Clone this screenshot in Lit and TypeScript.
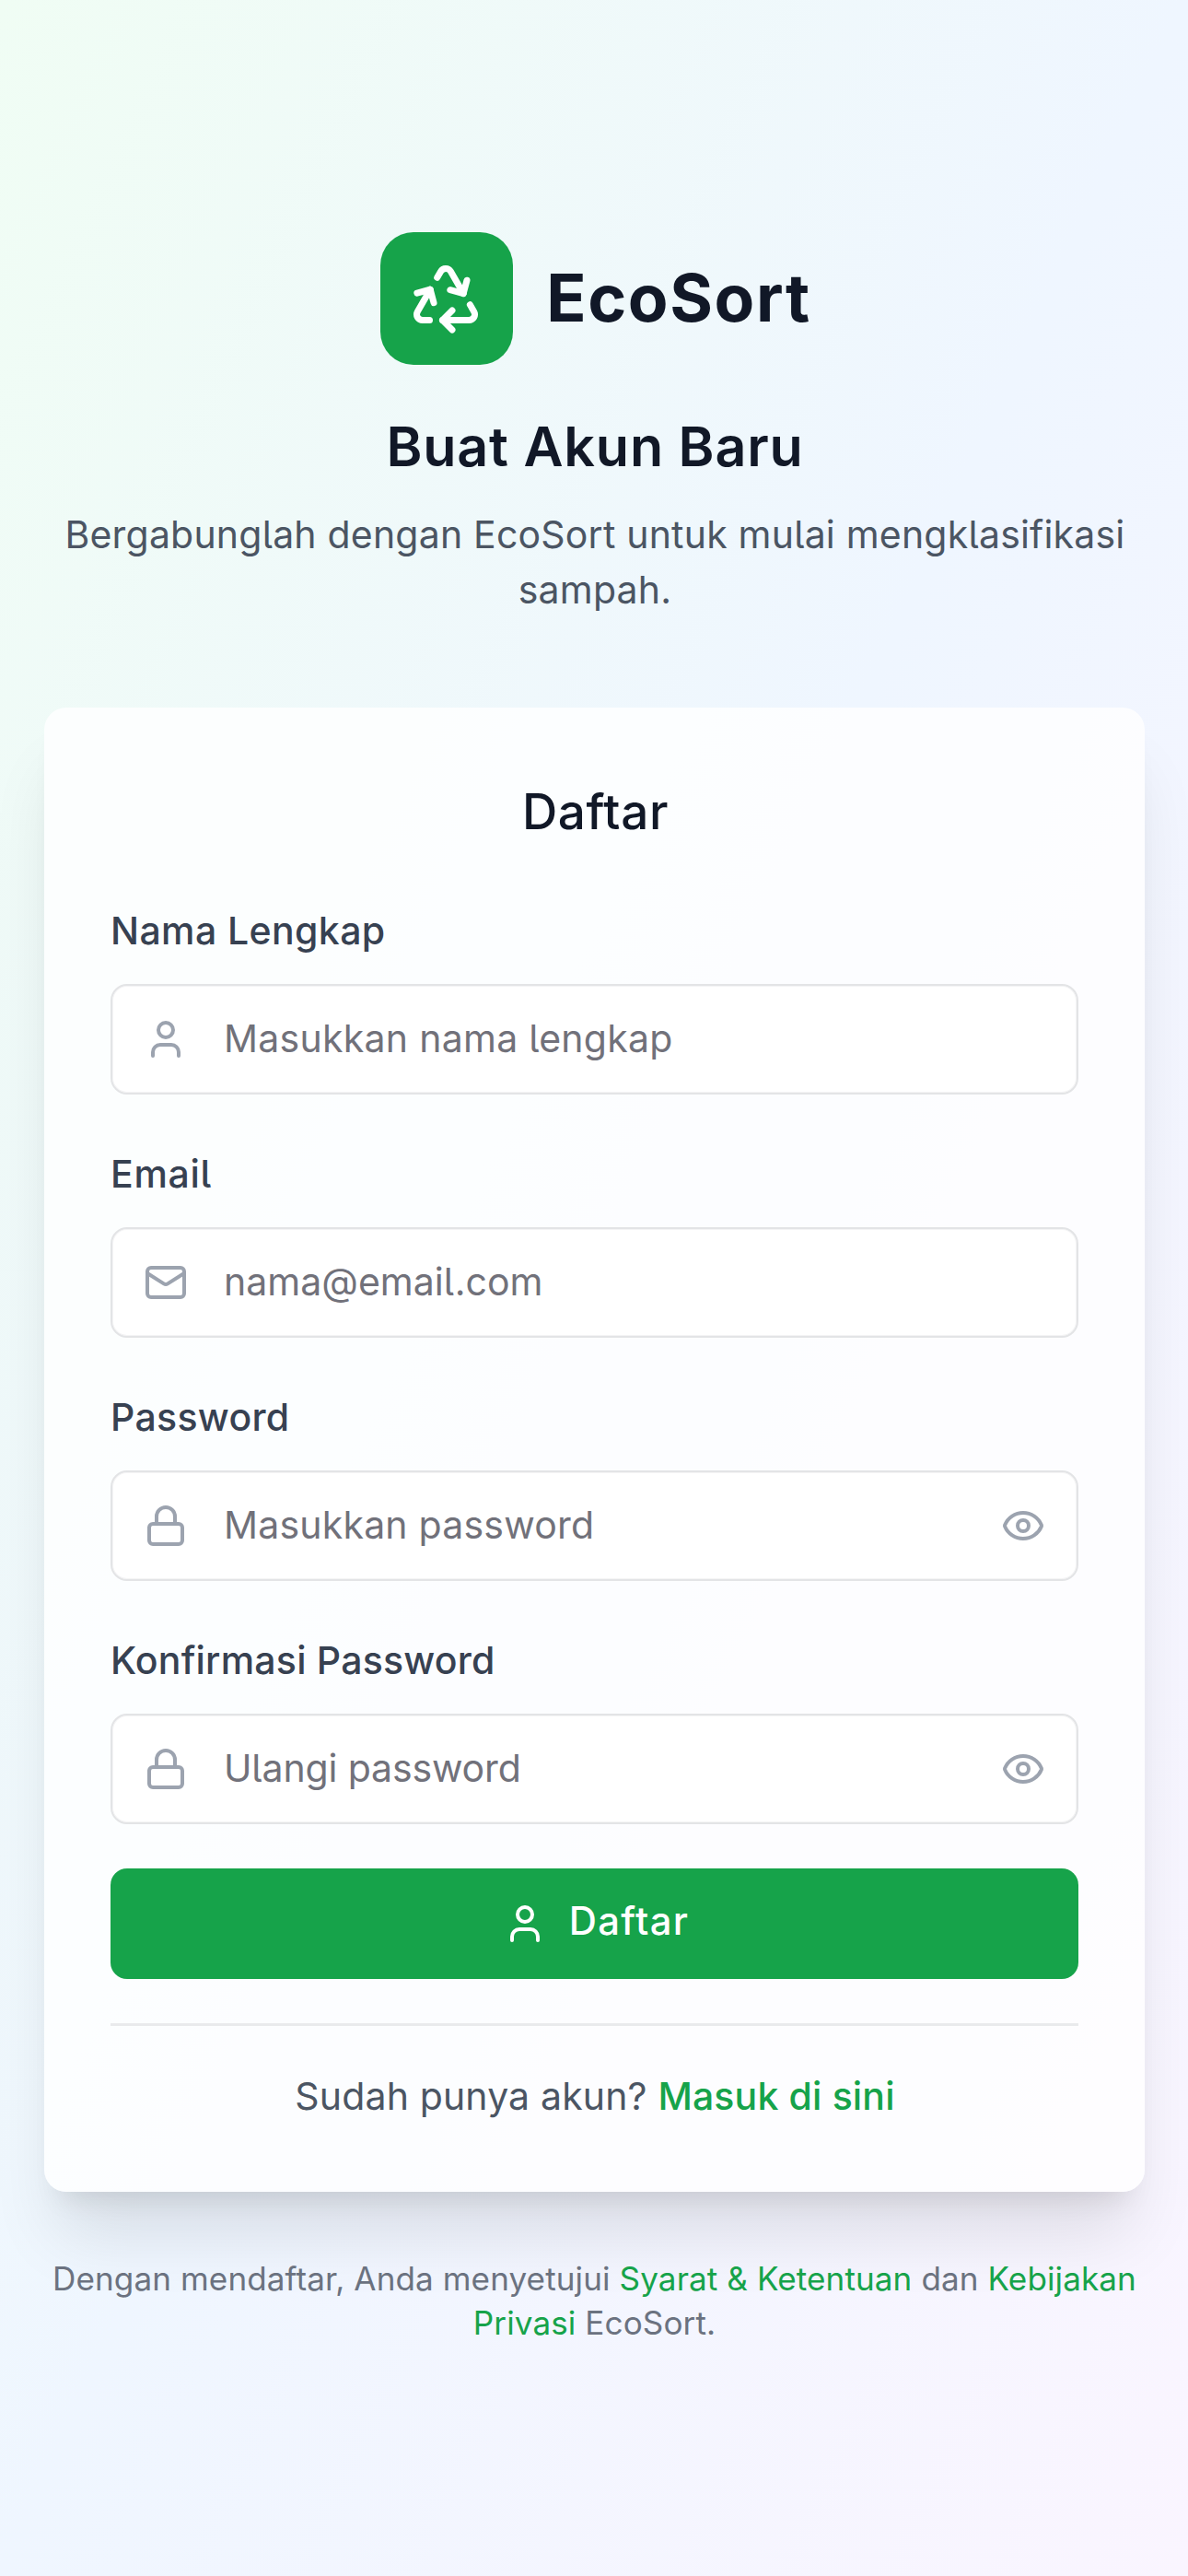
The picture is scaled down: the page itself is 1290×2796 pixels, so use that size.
import { LitElement, html, css, svg } from "lit";
import { customElement, property, state } from "lit/decorators.js";

const icons = {
  recycle: svg`
    <path d="M7 19H4.815a1.83 1.83 0 0 1-1.57-.881 1.785 1.785 0 0 1-.004-1.784L7.196 9.5"/>
    <path d="M11 19h8.203a1.83 1.83 0 0 0 1.556-.89 1.784 1.784 0 0 0 0-1.775l-1.226-2.12"/>
    <path d="m14 16-3 3 3 3"/>
    <path d="M8.293 13.596 7.196 9.5 3.1 10.598"/>
    <path d="m9.344 5.811 1.093-1.892A1.83 1.83 0 0 1 11.985 3a1.784 1.784 0 0 1 1.546.888l3.943 6.843"/>
    <path d="m13.378 9.633 4.096 1.098 1.097-4.096"/>`,
  user: svg`
    <path d="M19 21v-2a4 4 0 0 0-4-4H9a4 4 0 0 0-4 4v2"/>
    <circle cx="12" cy="7" r="4"/>`,
  mail: svg`
    <rect x="2" y="4" width="20" height="16" rx="2"/>
    <path d="m22 7-8.97 5.7a1.94 1.94 0 0 1-2.06 0L2 7"/>`,
  lock: svg`
    <rect x="3" y="11" width="18" height="11" rx="2"/>
    <path d="M7 11V7a5 5 0 0 1 10 0v4"/>`,
  eye: svg`
    <path d="M2.062 12.348a1 1 0 0 1 0-.696 10.75 10.75 0 0 1 19.876 0 1 1 0 0 1 0 .696 10.75 10.75 0 0 1-19.876 0"/>
    <circle cx="12" cy="12" r="3"/>`,
};

type IconName = keyof typeof icons;

@customElement("eco-icon")
class EcoIcon extends LitElement {
  @property() name: IconName = "user";

  static styles = css`
    :host {
      display: block;
      flex: none;
      width: 48px;
      height: 48px;
    }
    .icon {
      display: block;
      width: 100%;
      height: 100%;
      fill: none;
      stroke: currentColor;
      stroke-width: 2;
      stroke-linecap: round;
      stroke-linejoin: round;
    }
  `;

  render() {
    return html`<svg class="icon" viewBox="0 0 24 24" aria-hidden="true">${icons[this.name]}</svg>`;
  }
}

@customElement("eco-field")
class EcoField extends LitElement {
  @property() label = "";
  @property() placeholder = "";
  @property() icon: IconName = "user";
  @property() kind = "text";
  @state() private revealed = false;

  static styles = css`
    :host {
      display: block;
    }
    .label {
      display: block;
      margin-bottom: 37px;
      color: #374151;
      font-size: 41px;
      font-weight: 500;
      line-height: 42px;
      letter-spacing: var(--label-tracking, 0.3px);
    }
    .box {
      box-sizing: border-box;
      display: flex;
      align-items: center;
      height: 120px;
      padding: 0 34px;
      border: 2px solid #e3e4e6;
      border-radius: 18px;
      background: #fff;
      box-shadow: inset 0 0 0 1px #f4f4f5;
      color: #9ca3af;
    }
    .input {
      flex: 1;
      min-width: 0;
      height: 100%;
      margin-left: 39px;
      padding: 0 0 2px;
      box-sizing: border-box;
      border: 0;
      outline: 0;
      background: none;
      color: #111827;
      font: inherit;
      font-size: 41px;
      font-feature-settings: inherit;
      letter-spacing: var(--input-tracking, 0.2px);
    }
    .input::placeholder {
      color: #71717a;
      opacity: 1;
    }
    .toggle {
      display: block;
      padding: 0;
      border: 0;
      background: none;
      color: inherit;
      cursor: pointer;
    }
  `;

  render() {
    const secret = this.kind === "password";
    return html`
      <label class="label" for="control">${this.label}</label>
      <div class="box">
        <eco-icon name=${this.icon}></eco-icon>
        <input
          class="input"
          id="control"
          type=${secret && this.revealed ? "text" : this.kind}
          placeholder=${this.placeholder}
        />
        ${secret
          ? html`<button class="toggle" type="button" @click=${() => (this.revealed = !this.revealed)}>
              <eco-icon name="eye"></eco-icon>
            </button>`
          : null}
      </div>
    `;
  }
}

@customElement("app-root")
class AppRoot extends LitElement {
  static styles = css`
    :host {
      display: block;
      box-sizing: border-box;
      min-height: 2796px;
      padding: 252px 47px 0 48px;
      background: linear-gradient(to bottom right, #f0fdf4, #eff6ff, #faf5ff);
      font-family: Inter, "Liberation Sans", sans-serif;
      font-feature-settings: "cv05";
    }
    .brand {
      display: flex;
      align-items: center;
      justify-content: center;
      gap: 36px;
    }
    .logo {
      box-sizing: border-box;
      display: flex;
      align-items: center;
      justify-content: center;
      width: 144px;
      height: 144px;
      padding: 0 2px 2px 0;
      border-radius: 36px;
      background: #16a34a;
      color: #fff;
    }
    .logo-icon {
      width: 84px;
      height: 84px;
    }
    .name {
      margin: 0 -3px 0 0;
      padding-bottom: 3px;
      color: #111827;
      font-size: 71.4px;
      font-weight: 700;
      line-height: 96px;
      letter-spacing: 1.6px;
    }
    .headline {
      margin: 47px 0 0;
      padding-left: 1px;
      color: #111827;
      font-size: 59.2px;
      font-weight: 600;
      line-height: 84px;
      letter-spacing: 0.8px;
      text-align: center;
    }
    .lead {
      margin: 23px 0 0;
      padding-left: 1px;
      color: #4b5563;
      font-size: 41px;
      line-height: 60px;
      letter-spacing: 0.2px;
      text-align: center;
    }
    .card {
      box-sizing: border-box;
      height: 1610.5px;
      margin-top: 98px;
      padding: 86px 72px 0;
      border-radius: 24px;
      background: rgba(255, 255, 255, 0.8);
      box-shadow:
        0 60px 75px -15px rgba(0, 0, 0, 0.1),
        0 24px 30px -18px rgba(0, 0, 0, 0.1);
    }
    .card-title {
      margin: 0 0 81px;
      padding-left: 2px;
      color: #111827;
      font-size: 53px;
      font-weight: 500;
      line-height: 54px;
      letter-spacing: 0.6px;
      text-align: center;
    }
    .form {
      display: flex;
      flex-direction: column;
    }
    .field + .field {
      margin-top: 65px;
    }
    .field-name {
      --label-tracking: 0.4px;
      --input-tracking: 0.27px;
    }
    .field-email {
      --label-tracking: 0.7px;
      --input-tracking: 0.02px;
    }
    .field-confirm {
      --label-tracking: 0.22px;
      --input-tracking: -0.14px;
    }
    .submit {
      display: flex;
      align-items: center;
      justify-content: center;
      gap: 24px;
      height: 120px;
      margin-top: 48px;
      padding: 0;
      border: 0;
      border-radius: 18px;
      background: #16a34a;
      color: #fff;
      font-family: inherit;
      font-size: 41.8px;
      font-weight: 550;
      letter-spacing: 1.3px;
    }
    .submit-text {
      margin-right: -3px;
      padding-bottom: 6px;
    }
    .signin {
      margin: 48px 0 0;
      padding: 46px 0 0 1px;
      border-top: 3px solid #e9eaec;
      color: #4b5563;
      font-size: 41px;
      line-height: 60px;
      letter-spacing: 0.15px;
      text-align: center;
    }
    .signin-link {
      color: #16a34a;
      font-weight: 500;
    }
    .terms {
      margin: 70.5px 0 0;
      color: #6b7280;
      font-size: 35.1px;
      line-height: 48px;
      letter-spacing: 0.1px;
      text-align: center;
    }
    .terms-link {
      color: #16a34a;
    }
  `;

  render() {
    return html`
      <header>
        <div class="brand">
          <div class="logo"><eco-icon class="logo-icon" name="recycle"></eco-icon></div>
          <h1 class="name">EcoSort</h1>
        </div>
        <h2 class="headline">Buat Akun Baru</h2>
        <p class="lead">Bergabunglah dengan EcoSort untuk mulai mengklasifikasi sampah.</p>
      </header>
      <main class="card">
        <h3 class="card-title">Daftar</h3>
        <form class="form" @submit=${(e: Event) => e.preventDefault()}>
          <eco-field class="field field-name" label="Nama Lengkap" placeholder="Masukkan nama lengkap" icon="user"></eco-field>
          <eco-field class="field field-email" label="Email" placeholder="nama@email.com" icon="mail" kind="email"></eco-field>
          <eco-field class="field" label="Password" placeholder="Masukkan password" icon="lock" kind="password"></eco-field>
          <eco-field class="field field-confirm" label="Konfirmasi Password" placeholder="Ulangi password" icon="lock" kind="password"></eco-field>
          <button class="submit" type="submit">
            <eco-icon name="user"></eco-icon>
            <span class="submit-text">Daftar</span>
          </button>
        </form>
        <p class="signin">Sudah punya akun? <a class="signin-link">Masuk di sini</a></p>
      </main>
      <p class="terms">
        Dengan mendaftar, Anda menyetujui <a class="terms-link">Syarat &amp; Ketentuan</a> dan
        <a class="terms-link">Kebijakan Privasi</a> EcoSort.
      </p>
    `;
  }
}
